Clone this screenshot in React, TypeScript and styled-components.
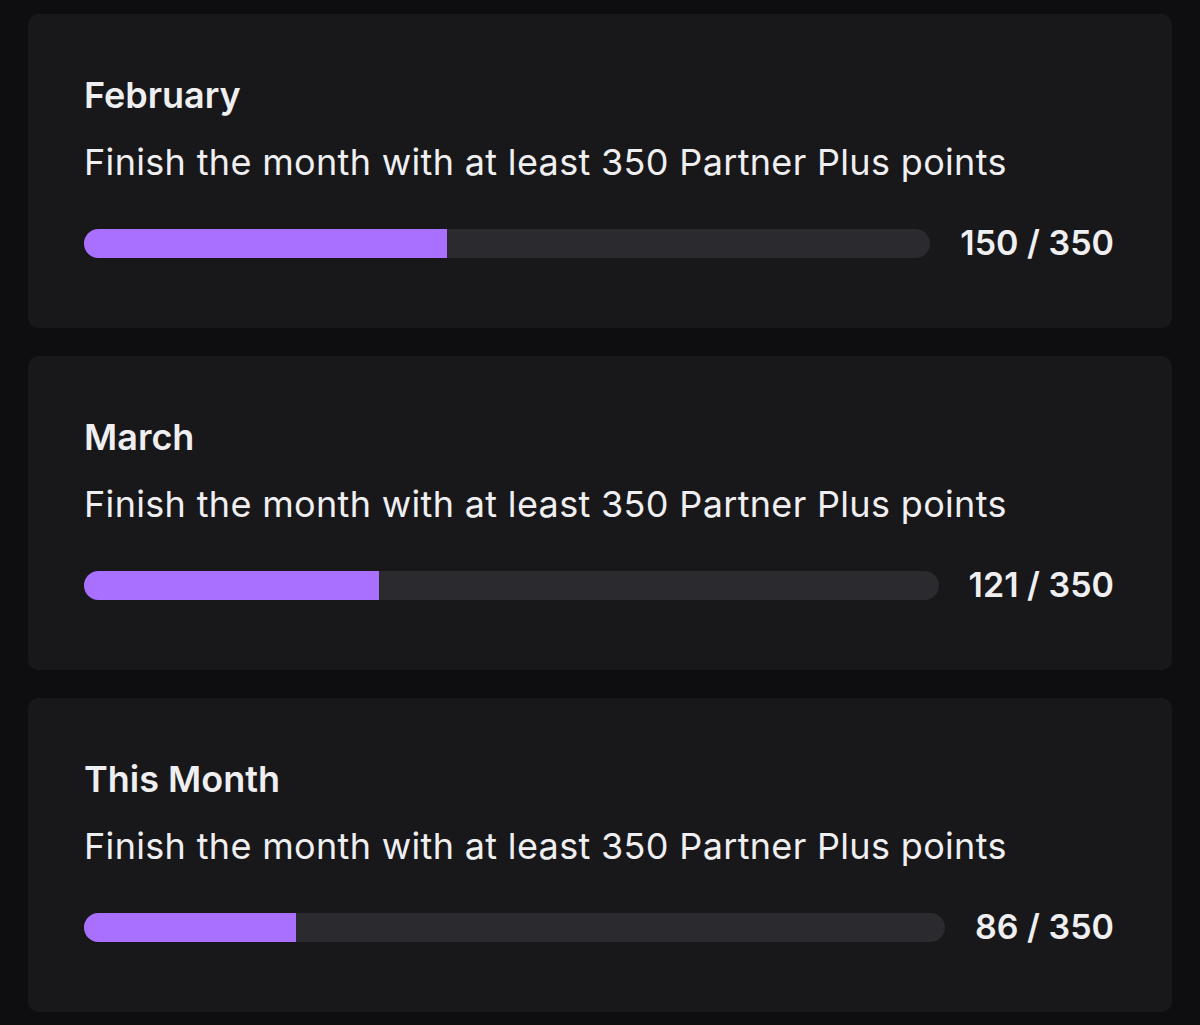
import React from "react"
import styled, { createGlobalStyle } from "styled-components"

const GlobalStyle = createGlobalStyle`
  body {
    margin: 0;
    background: #0e0e10;
    font-family: Inter, "Noto Sans", sans-serif;
    color: #efeff1;
  }
`

const Page = styled.div`
  display: flex;
  flex-direction: column;
  gap: 28px;
  padding: 14px 28px;
`

const Card = styled.section`
  background: #18181b;
  border-radius: 10px;
  height: 314px;
  box-sizing: border-box;
  padding: 59px 58px 0 56px;
  display: flex;
  flex-direction: column;
`

const Title = styled.h2`
  margin: 0;
  font-size: 36px;
  line-height: 44px;
  font-weight: 600;
`

const Description = styled.p`
  margin: 23px 0 0;
  font-size: 36px;
  line-height: 44px;
  font-weight: 400;
  letter-spacing: 0.33px;
`

const ProgressRow = styled.div`
  display: flex;
  align-items: center;
  gap: 30px;
  margin-top: 37px;
`

const Track = styled.div`
  flex: 1;
  height: 29px;
  border-radius: 15px;
  background: #2a2a2f;
  overflow: hidden;
`

const Fill = styled.div`
  height: 100%;
  background: #a970ff;
`

const Count = styled.span`
  font-size: 34px;
  font-weight: 600;
  line-height: 44px;
  white-space: nowrap;
`

const goal = 350

const months = [
  { name: "February", points: 150 },
  { name: "March", points: 121 },
  { name: "This Month", points: 86 },
]

export default function App() {
  return (
    <>
      <GlobalStyle />
      <Page>
        {months.map((m) => (
          <Card key={m.name}>
            <Title>{m.name}</Title>
            <Description>Finish the month with at least {goal} Partner Plus points</Description>
            <ProgressRow>
              <Track>
                <Fill style={{ width: `${(m.points / goal) * 100}%` }} />
              </Track>
              <Count>{m.points} / {goal}</Count>
            </ProgressRow>
          </Card>
        ))}
      </Page>
    </>
  )
}
